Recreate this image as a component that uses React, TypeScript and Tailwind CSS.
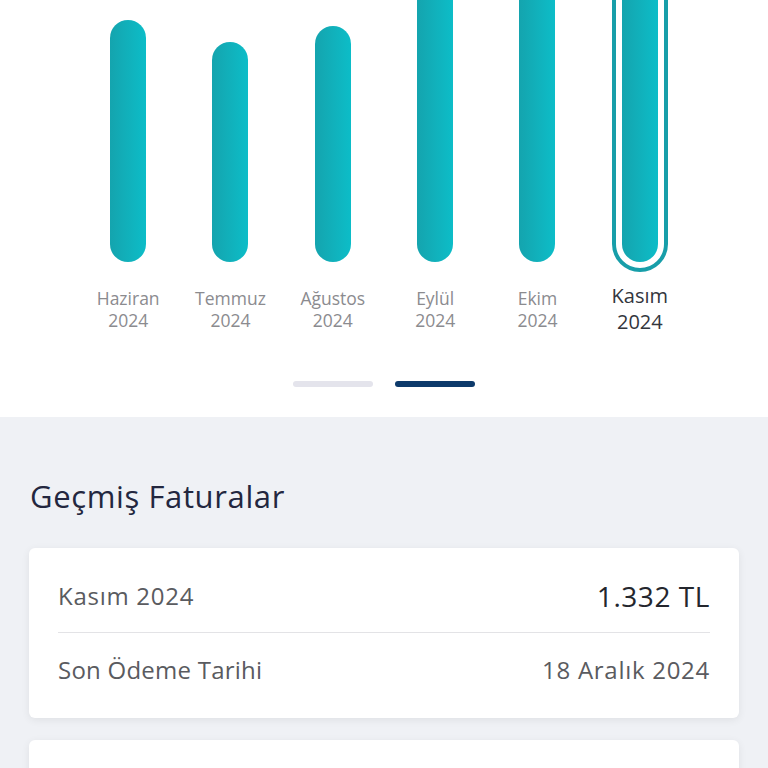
const months = [
  { name: "Haziran", year: "2024", height: 242 },
  { name: "Temmuz", year: "2024", height: 220 },
  { name: "Ağustos", year: "2024", height: 236 },
  { name: "Eylül", year: "2024", height: 290 },
  { name: "Ekim", year: "2024", height: 286 },
  { name: "Kasım", year: "2024", height: 300, selected: true },
]

function Bar({ height }: { height: number }) {
  return (
    <div
      className="w-9 rounded-full bg-gradient-to-r from-[#14a4ae] to-[#0cbdc8]"
      style={{ height }}
    />
  )
}

export default function App() {
  return (
    <div className="min-h-screen bg-[#eff1f5] font-['Open_Sans',sans-serif]">
      <div className="bg-white">
        <div className="grid grid-cols-6 px-[77px]">
          {months.map((m) => (
            <div key={m.name} className="flex flex-col items-center">
              <div className="h-[272px] w-full overflow-hidden flex items-end justify-center">
                {m.selected ? (
                  <div className="rounded-full border-[4px] border-[#179ea9] p-[6px]">
                    <Bar height={m.height} />
                  </div>
                ) : (
                  <div className="mb-[10px]">
                    <Bar height={m.height} />
                  </div>
                )}
              </div>
              {m.selected ? (
                <div className="mt-[11px] text-center text-[20px] leading-[26px] font-medium text-[#33363d]">
                  <div>{m.name}</div>
                  <div>{m.year}</div>
                </div>
              ) : (
                <div className="mt-[15px] text-center text-[17.5px] leading-[22px] text-[#8b8b8f]">
                  <div>{m.name}</div>
                  <div>{m.year}</div>
                </div>
              )}
            </div>
          ))}
        </div>
        <div className="flex justify-center gap-[22px] pt-[46px] pb-[30px]">
          <div className="h-[6px] w-20 rounded-full bg-[#e4e4ec]" />
          <div className="h-[6px] w-20 rounded-full bg-[#0d3a6b]" />
        </div>
      </div>

      <div className="px-[29px] pt-[61px]">
        <h2 className="pl-px text-[31px] leading-9 tracking-[0.02em] text-[#23273f]">
          Geçmiş Faturalar
        </h2>
        <div className="mt-[34px] rounded-md bg-white px-[29px] shadow-[0_2px_8px_rgba(0,0,0,0.07)]">
          <div className="flex items-center justify-between border-b border-[#e3e3e6] pt-[32px] pb-[20px]">
            <span className="text-[24px] leading-8 tracking-[0.03em] text-[#5a5b60]">Kasım 2024</span>
            <span className="text-[28px] leading-8 tracking-[0.02em] text-[#24262d]">1.332 TL</span>
          </div>
          <div className="flex items-center justify-between pt-[22px] pb-[33px]">
            <span className="text-[24px] leading-[30px] tracking-[0.01em] text-[#5a5b60]">Son Ödeme Tarihi</span>
            <span className="text-[24px] leading-[30px] tracking-[0.03em] text-[#5a5b60]">18 Aralık 2024</span>
          </div>
        </div>
        <div className="mt-[22px] h-24 rounded-md bg-white shadow-[0_2px_8px_rgba(0,0,0,0.07)]" />
      </div>
    </div>
  )
}
